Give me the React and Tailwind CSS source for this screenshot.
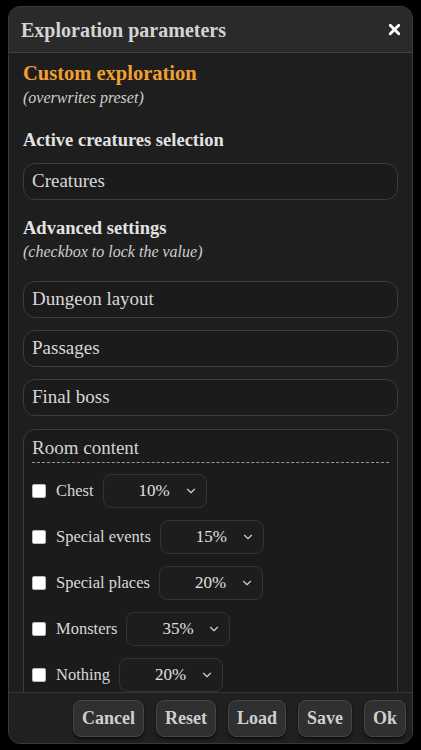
import React from "react";
import { X, ChevronDown } from "lucide-react";

// Campos de seleccion simples (solo visual)
const Campo = ({ texto }) => (
  <div className="h-[37px] w-full rounded-[12px] border border-[#3c3c3c] bg-[#1b1b1b] px-[8px] flex items-center text-[19px] text-[#d8d8d8]">
    {texto}
  </div>
);

const filas = [
  { etiqueta: "Chest", valor: "10%" },
  { etiqueta: "Special events", valor: "15%" },
  { etiqueta: "Special places", valor: "20%" },
  { etiqueta: "Monsters", valor: "35%" },
  { etiqueta: "Nothing", valor: "20%" },
];

const botones = ["Cancel", "Reset", "Load", "Save", "Ok"];

export default function App() {
  return (
    <div
      className="w-[421px] h-[750px] bg-black pt-[6px] px-[8px]"
      style={{ fontFamily: '"Liberation Serif", serif' }}
    >
      <div className="h-[738px] w-[405px] rounded-[12px] border border-[#3a3a3a] bg-[#1e1e1e] flex flex-col overflow-hidden">
        {/* Cabecera */}
        <div className="h-[46px] shrink-0 bg-[#2a2a2a] border-b border-[#3f3f3f] flex items-center justify-between pl-[12px] pr-[9px]">
          <h1 className="text-[20px] font-bold text-[#d4d4d4]">Exploration parameters</h1>
          <X className="w-[17px] h-[17px] text-white" strokeWidth={4} />
        </div>

        {/* Contenido */}
        <div className="flex-1 overflow-hidden px-[14px] pt-[8px]">
          <h2 className="text-[20.5px] font-bold text-[#f0a030] leading-[24px]">Custom exploration</h2>
          <p className="italic text-[16px] text-[#cfcfcf] leading-[20px] mt-[3px]">(overwrites preset)</p>

          <h3 className="mt-[21px] text-[18.5px] font-bold text-[#e2e2e2] leading-[22px]">Active creatures selection</h3>
          <div className="mt-[12px]">
            <Campo texto="Creatures" />
          </div>

          <h3 className="mt-[17px] text-[18.5px] font-bold text-[#e2e2e2] leading-[22px]">Advanced settings</h3>
          <p className="italic text-[16px] text-[#cfcfcf] leading-[20px] mt-[3px]">(checkbox to lock the value)</p>

          <div className="mt-[19px] flex flex-col gap-[12px]">
            <Campo texto="Dungeon layout" />
            <Campo texto="Passages" />
            <Campo texto="Final boss" />
          </div>

          <div className="mt-[13px] rounded-[12px] border border-[#3c3c3c] bg-[#1b1b1b] px-[8px] pt-[6px] pb-[10px]">
            <div className="text-[19px] text-[#d4d4d4] leading-[24px] pb-[2px] border-b border-dashed border-[#9a9a9a]">
              Room content
            </div>
            <div className="flex flex-col gap-[12px] mt-[11px]">
              {filas.map((fila) => (
                <div key={fila.etiqueta} className="flex items-center h-[34px]">
                  <span className="w-[14px] h-[14px] bg-white rounded-[2px] border border-[#bbb]"></span>
                  <span className="ml-[10px] text-[16.5px] text-[#d8d8d8]">{fila.etiqueta}</span>
                  <div className="ml-[9px] w-[104px] h-[34px] rounded-[8px] border border-[#333] bg-[#1d1d1d] flex items-center pl-[35px] pr-[8px] text-[17px] text-[#e0e0e0]">
                    <span className="flex-1">{fila.valor}</span>
                    <ChevronDown className="w-[14px] h-[14px] text-[#cfcfcf]" strokeWidth={2} />
                  </div>
                </div>
              ))}
            </div>
          </div>
        </div>

        {/* Pie con botones */}
        <div className="h-[51px] shrink-0 border-t border-[#353535] bg-[#202020] flex items-center justify-end gap-[12px] pr-[6px]">
          {botones.map((b) => (
            <button
              key={b}
              className="h-[37px] px-[8px] rounded-[8px] border border-[#444] bg-[#303030] shadow-[0_2px_3px_rgba(0,0,0,0.6)] text-[18px] font-bold text-[#cfcfcf]"
            >
              {b}
            </button>
          ))}
        </div>
      </div>
    </div>
  );
}
